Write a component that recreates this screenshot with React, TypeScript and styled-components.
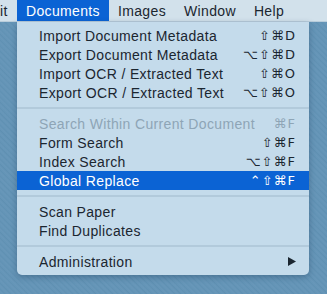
import styled, { createGlobalStyle } from 'styled-components';

const GlobalStyle = createGlobalStyle`
  html, body {
    margin: 0;
    padding: 0;
  }
  body {
    width: 327px;
    height: 294px;
    overflow: hidden;
    font-family: "Liberation Sans", Arial, sans-serif;
    background: repeating-linear-gradient(45deg, #6394b6 0px, #6897b9 2px, #5f90b2 4px);
  }
`;

const Screen = styled.div`
  width: 327px;
  height: 294px;
  display: flex;
  flex-direction: column;
`;

const MenuBar = styled.div`
  height: 22px;
  display: flex;
  align-items: stretch;
  background: #d2e1eb;
  border-bottom: 1px solid #b9cddb;
  box-sizing: border-box;
`;

const BarItem = styled.div<{ $active?: boolean; $clipped?: boolean }>`
  display: flex;
  align-items: center;
  padding: ${(p) => (p.$clipped ? '0 0 0 0' : '0 9px')};
  width: ${(p) => (p.$clipped ? '17px' : 'auto')};
  box-sizing: border-box;
  font-size: 14px;
  letter-spacing: 0.35px;
  color: ${(p) => (p.$active ? '#ffffff' : '#1b2630')};
  background: ${(p) => (p.$active ? '#0b63d4' : 'transparent')};
`;

const Panel = styled.div`
  margin-left: 17px;
  width: 292px;
  box-sizing: border-box;
  padding: 4px 0 4px;
  background: #c4dbeb;
  border-radius: 0 0 5px 5px;
  box-shadow: 0 2px 6px rgba(20, 50, 80, 0.35);
  display: flex;
  flex-direction: column;
`;

const Row = styled.div<{ $active?: boolean; $disabled?: boolean }>`
  height: 19px;
  display: flex;
  align-items: center;
  justify-content: space-between;
  padding: 0 13px 0 22px;
  font-size: 14px;
  letter-spacing: 0.35px;
  background: ${(p) => (p.$active ? '#0b63d4' : 'transparent')};
  color: ${(p) => (p.$active ? '#ffffff' : p.$disabled ? '#8ea5b6' : '#1b2630')};
`;

const Keys = styled.span`
  font-family: "DejaVu Sans", "Liberation Sans", sans-serif;
  font-size: 13px;
  letter-spacing: 1px;
`;

const Separator = styled.div`
  height: 12px;
  display: flex;
  align-items: center;
  &::after {
    content: '';
    flex: 1;
    height: 2px;
    background: #b2cadb;
  }
`;

const Arrow = () => (
  <svg width="8" height="9" viewBox="0 0 8 9">
    <path d="M0 0 L8 4.5 L0 9 Z" fill="#1b2630" />
  </svg>
);

type Item = { label: string; keys?: string; active?: boolean; disabled?: boolean } | 'sep';

const items: Item[] = [
  { label: 'Import Document Metadata', keys: '⇧⌘D' },
  { label: 'Export Document Metadata', keys: '⌥⇧⌘D' },
  { label: 'Import OCR / Extracted Text', keys: '⇧⌘O' },
  { label: 'Export OCR / Extracted Text', keys: '⌥⇧⌘O' },
  'sep',
  { label: 'Search Within Current Document', keys: '⌘F', disabled: true },
  { label: 'Form Search', keys: '⇧⌘F' },
  { label: 'Index Search', keys: '⌥⇧⌘F' },
  { label: 'Global Replace', keys: '⌃⇧⌘F', active: true },
  'sep',
  { label: 'Scan Paper' },
  { label: 'Find Duplicates' },
  'sep',
];

export default function App() {
  return (
    <Screen>
      <GlobalStyle />
      <MenuBar>
        <BarItem $clipped>it</BarItem>
        <BarItem $active>Documents</BarItem>
        <BarItem>Images</BarItem>
        <BarItem>Window</BarItem>
        <BarItem>Help</BarItem>
      </MenuBar>
      <Panel>
        {items.map((it, i) =>
          it === 'sep' ? (
            <Separator key={i} />
          ) : (
            <Row key={i} $active={it.active} $disabled={it.disabled}>
              <span>{it.label}</span>
              {it.keys && <Keys>{it.keys}</Keys>}
            </Row>
          )
        )}
        <Row>
          <span>Administration</span>
          <Arrow />
        </Row>
      </Panel>
    </Screen>
  );
}
